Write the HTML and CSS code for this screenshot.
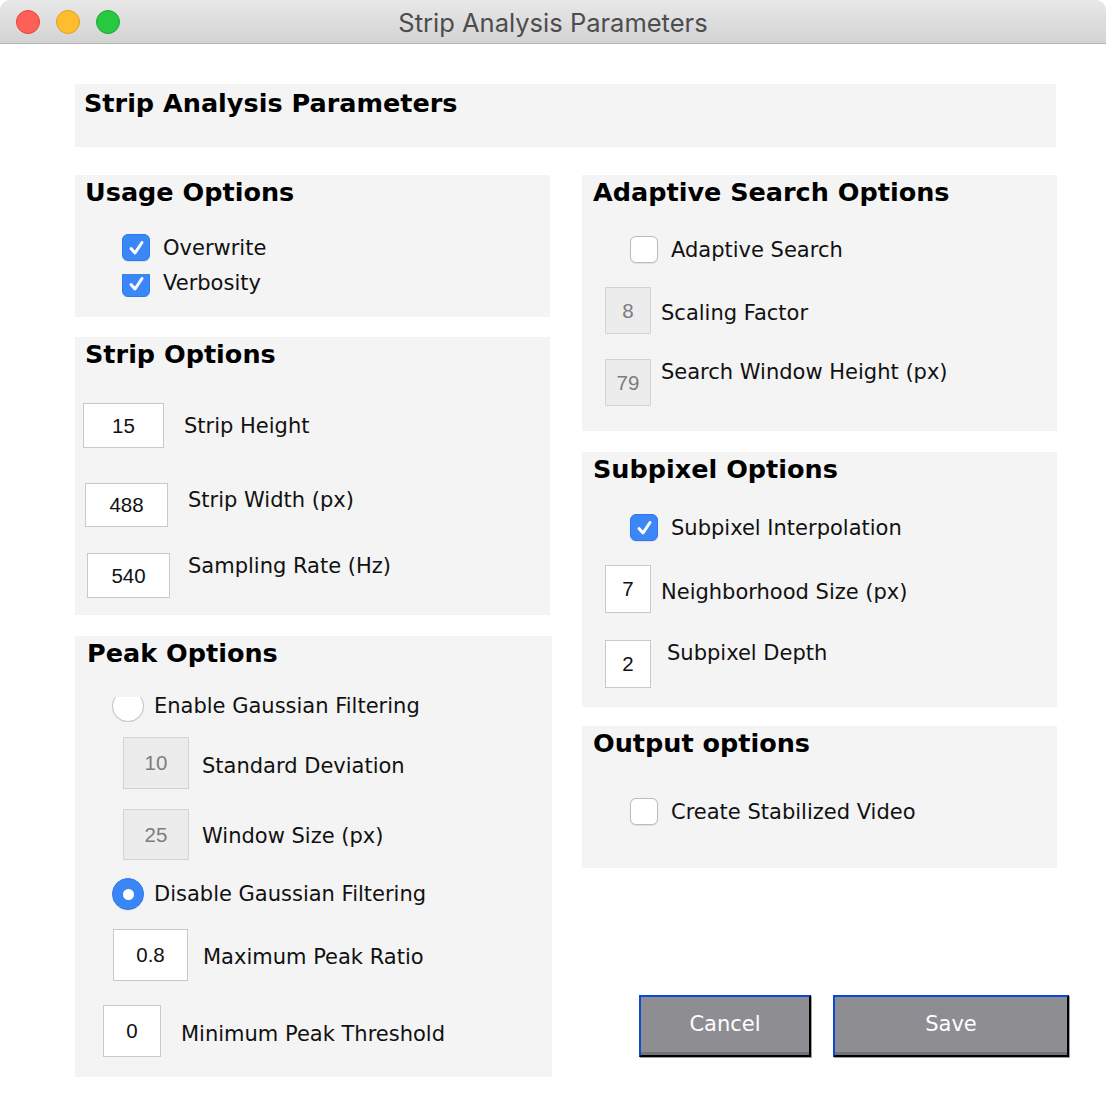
FILE: index.html
```html
<!DOCTYPE html>
<html>
<head>
<meta charset="utf-8">
<title>Strip Analysis Parameters</title>
<link rel="stylesheet" href="styles.css">
</head>
<body>
<div class="window">
  <div class="titlebar">
    <div class="lights"><span class="light red"></span><span class="light yellow"></span><span class="light green"></span></div>
    <div class="win-title">Strip Analysis Parameters</div>
    <div></div>
  </div>
  <div class="content">
    <div class="header"><h1 class="header-title">Strip Analysis Parameters</h1></div>
    <div class="columns">
      <div class="col">
        <section class="panel p-usage">
          <h2 class="ptitle">Usage Options</h2>
          <div class="row r-u1"><span class="cb checked"><svg viewBox="0 0 27 27" width="27" height="27"><path d="M8 14.5 L12 19 L19 8.5" fill="none" stroke="#fff" stroke-width="3" stroke-linecap="round" stroke-linejoin="round"/></svg></span><span class="label">Overwrite</span></div>
          <div class="row r-u2"><span class="cb-clip"><span class="cb checked"><svg viewBox="0 0 27 27" width="27" height="27"><path d="M8 14.5 L12 19 L19 8.5" fill="none" stroke="#fff" stroke-width="3" stroke-linecap="round" stroke-linejoin="round"/></svg></span></span><span class="label">Verbosity</span></div>
        </section>
        <section class="panel p-strip">
          <h2 class="ptitle">Strip Options</h2>
          <div class="row r-s1"><span class="field">15</span><span class="label">Strip Height</span></div>
          <div class="row r-s2"><span class="field">488</span><span class="label">Strip Width (px)</span></div>
          <div class="row r-s3"><span class="field">540</span><span class="label">Sampling Rate (Hz)</span></div>
        </section>
        <section class="panel p-peak">
          <h2 class="ptitle t-peak">Peak Options</h2>
          <div class="row r-p1"><span class="radio-clip"><span class="radio"></span></span><span class="label">Enable Gaussian Filtering</span></div>
          <div class="row r-p2"><span class="field disabled">10</span><span class="label">Standard Deviation</span></div>
          <div class="row r-p3"><span class="field disabled">25</span><span class="label">Window Size (px)</span></div>
          <div class="row r-p4"><span class="radio selected"><span class="dot"></span></span><span class="label">Disable Gaussian Filtering</span></div>
          <div class="row r-p5"><span class="field">0.8</span><span class="label">Maximum Peak Ratio</span></div>
          <div class="row r-p6"><span class="field">0</span><span class="label">Minimum Peak Threshold</span></div>
        </section>
      </div>
      <div class="col">
        <section class="panel p-adapt">
          <h2 class="ptitle t-right">Adaptive Search Options</h2>
          <div class="row r-a1"><span class="cb"></span><span class="label">Adaptive Search</span></div>
          <div class="row r-a2"><span class="field disabled">8</span><span class="label">Scaling Factor</span></div>
          <div class="row r-a3"><span class="field disabled">79</span><span class="label">Search Window Height (px)</span></div>
        </section>
        <section class="panel p-sub">
          <h2 class="ptitle t-right">Subpixel Options</h2>
          <div class="row r-b1"><span class="cb checked"><svg viewBox="0 0 27 27" width="27" height="27"><path d="M8 14.5 L12 19 L19 8.5" fill="none" stroke="#fff" stroke-width="3" stroke-linecap="round" stroke-linejoin="round"/></svg></span><span class="label">Subpixel Interpolation</span></div>
          <div class="row r-b2"><span class="field">7</span><span class="label">Neighborhood Size (px)</span></div>
          <div class="row r-b3"><span class="field">2</span><span class="label">Subpixel Depth</span></div>
        </section>
        <section class="panel p-out">
          <h2 class="ptitle t-right">Output options</h2>
          <div class="row r-o1"><span class="cb"></span><span class="label">Create Stabilized Video</span></div>
        </section>
        <div class="buttons">
          <button class="btn btn-cancel">Cancel</button>
          <button class="btn btn-save">Save</button>
        </div>
      </div>
    </div>
  </div>
</div>
</body>
</html>
```

FILE: styles.css
```css
* { box-sizing: border-box; margin: 0; padding: 0; }
body { margin: 0; background: #fff; font-family: "DejaVu Sans", "Liberation Sans", sans-serif; color: #111; }

.window { width: 1106px; height: 1116px; background: #fff; border-radius: 10px 10px 0 0; overflow: hidden; }

.titlebar {
  height: 44px;
  border-bottom: 1px solid #b3b3b3;
  background: linear-gradient(#e9e8e9, #d4d3d4);
  display: grid;
  grid-template-columns: 1fr auto 1fr;
  align-items: center;
}
.lights { display: flex; gap: 16px; padding-left: 16px; }
.light { width: 24px; height: 24px; border-radius: 50%; }
.red { background: #fe5f57; border: 1px solid #e1453e; }
.yellow { background: #febc2e; border: 1px solid #dfa024; }
.green { background: #28c840; border: 1px solid #1cab2c; }
.win-title { font-family: Inter, "Liberation Sans", sans-serif; font-size: 25.5px; color: #4d4d4d; padding-top: 2px; }

.content { padding: 40px 0 0 75px; }
.header { width: 981px; height: 63px; background: #f4f4f4; padding: 2px 0 0 9px; }
.header-title { font-size: 25.5px; font-weight: bold; line-height: 34px; color: #000; }

.columns { display: flex; gap: 32px; margin-top: 28px; }
.col { width: 475px; display: flex; flex-direction: column; align-items: flex-start; }

.panel { background: #f4f4f4; width: 475px; display: flex; flex-direction: column; align-items: flex-start; }
.ptitle { font-size: 25.5px; font-weight: bold; line-height: 34px; margin-left: 10px; color: #000; }
.t-peak { margin-left: 12px; }
.t-right { margin-left: 11px; }

.p-usage { height: 142px; }
.p-strip { height: 278px; margin-top: 20px; }
.p-peak { height: 441px; margin-top: 21px; width: 477px; }
.p-adapt { height: 256px; }
.p-sub { height: 255px; margin-top: 21px; }
.p-out { height: 142px; margin-top: 19px; }

.row { display: flex; align-items: flex-start; }
.label { font-size: 21px; line-height: 26px; white-space: nowrap; color: #111; }

.field {
  flex-shrink: 0;
  background: #fff;
  border: 1px solid #c9c9c9;
  font-family: "Liberation Sans", Arial, sans-serif;
  font-size: 20.5px;
  color: #111;
  display: flex;
  align-items: center;
  justify-content: center;
}
.field.disabled { background: #ececec; border-color: #d3d3d3; color: #7d7d7d; }

.cb {
  flex-shrink: 0;
  width: 28px; height: 27px;
  border-radius: 6px;
  background: #fff;
  border: 1px solid #bcbcbc;
  box-shadow: 0 0.5px 1px rgba(0,0,0,0.08);
  display: flex; align-items: center; justify-content: center;
}
.cb svg { display: block; margin: -1px; }
.cb.checked { background: #3c87f7; border-color: #3079ec; }
.cb-clip { width: 28px; height: 23px; overflow: hidden; display: flex; align-items: flex-end; flex-shrink: 0; }

.radio-clip { width: 32px; height: 25px; overflow: hidden; display: flex; align-items: flex-end; flex-shrink: 0; }
.radio {
  flex-shrink: 0;
  width: 32px; height: 32px; border-radius: 50%;
  background: #fff;
  border: 1px solid #c4c4c4;
  box-shadow: 0 0.5px 1px rgba(0,0,0,0.1);
  display: flex; align-items: center; justify-content: center;
}
.radio.selected { background: #3a86f7; border-color: #2f7bef; }
.dot { width: 11px; height: 11px; border-radius: 50%; background: #fff; }

/* Usage */
.r-u1 { margin-top: 25px; }
.r-u1 .cb { margin-left: 47px; }
.r-u1 .label { margin-left: 13px; margin-top: 1px; }
.r-u2 { margin-top: 13px; }
.r-u2 .cb-clip { margin-left: 47px; }
.r-u2 .label { margin-left: 13px; margin-top: -4px; }

/* Strip */
.r-s1 { margin-top: 32px; }
.r-s1 .field { margin-left: 8px; width: 81px; height: 45px; }
.r-s1 .label { margin-left: 20px; margin-top: 10px; }
.r-s2 { margin-top: 35px; }
.r-s2 .field { margin-left: 10px; width: 83px; height: 44px; }
.r-s2 .label { margin-left: 20px; margin-top: 4px; }
.r-s3 { margin-top: 26px; }
.r-s3 .field { margin-left: 12px; width: 83px; height: 45px; }
.r-s3 .label { margin-left: 18px; margin-top: 0; }

/* Peak */
.r-p1 { margin-top: 23px; }
.r-p1 .radio-clip { margin-left: 37px; margin-top: 4px; }
.r-p1 .label { margin-left: 10px; }
.r-p2 { margin-top: 15px; }
.r-p2 .field { margin-left: 48px; width: 66px; height: 52px; }
.r-p2 .label { margin-left: 13px; margin-top: 16px; }
.r-p3 { margin-top: 20px; }
.r-p3 .field { margin-left: 48px; width: 66px; height: 51px; }
.r-p3 .label { margin-left: 13px; margin-top: 14px; }
.r-p4 { margin-top: 18px; }
.r-p4 .radio { margin-left: 37px; }
.r-p4 .label { margin-left: 10px; margin-top: 3px; }
.r-p5 { margin-top: 19px; }
.r-p5 .field { margin-left: 38px; width: 75px; height: 52px; }
.r-p5 .label { margin-left: 15px; margin-top: 15px; }
.r-p6 { margin-top: 24px; }
.r-p6 .field { margin-left: 28px; width: 58px; height: 52px; }
.r-p6 .label { margin-left: 20px; margin-top: 16px; }

/* Adaptive */
.r-a1 { margin-top: 27px; }
.r-a1 .cb { margin-left: 48px; }
.r-a1 .label { margin-left: 13px; margin-top: 1px; }
.r-a2 { margin-top: 24px; }
.r-a2 .field, .r-a3 .field { margin-left: 23px; width: 46px; height: 47px; }
.r-a2 .label { margin-left: 10px; margin-top: 13px; }
.r-a3 { margin-top: 25px; }
.r-a3 .label { margin-left: 10px; margin-top: 0; }

/* Subpixel */
.r-b1 { margin-top: 28px; }
.r-b1 .cb { margin-left: 48px; }
.r-b1 .label { margin-left: 13px; margin-top: 1px; }
.r-b2 { margin-top: 24px; }
.r-b2 .field, .r-b3 .field { margin-left: 23px; width: 46px; height: 48px; }
.r-b2 .label { margin-left: 10px; margin-top: 14px; }
.r-b3 { margin-top: 27px; }
.r-b3 .label { margin-left: 16px; margin-top: 0; }

/* Output */
.r-o1 { margin-top: 38px; }
.r-o1 .cb { margin-left: 48px; }
.r-o1 .label { margin-left: 13px; margin-top: 1px; }

/* Buttons */
.buttons { display: flex; gap: 22px; margin-top: 127px; margin-left: 57px; }
.btn {
  height: 62px;
  background: #8e8d92;
  color: #fff;
  font-family: "DejaVu Sans", sans-serif;
  font-size: 21px;
  border-top: 2px solid #0b49d9;
  border-left: 2px solid #0b49d9;
  border-right: 2px solid #000;
  border-bottom: 2px solid #000;
  box-shadow: inset 0 -3px 0 #747378, 1px 1px 0 #a0a0a0;
  padding-bottom: 4px;
}
.btn-cancel { width: 172px; }
.btn-save { width: 236px; }
```
